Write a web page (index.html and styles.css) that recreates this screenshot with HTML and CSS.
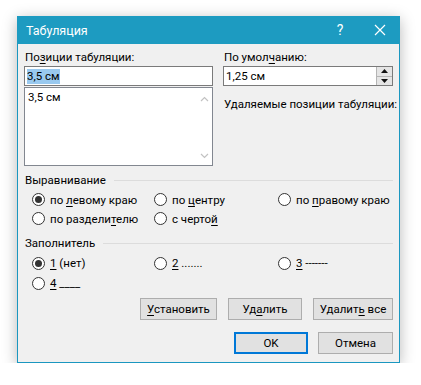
FILE: index.html
```html
<!DOCTYPE html>
<html lang="ru">
  <head>
    <meta charset="UTF-8" />
    <title>Табуляция</title>
    <link rel="stylesheet" href="styles.css">
  </head>
  <body>
    <div class="dialog">
      <div class="titlebar">
        <span class="title">Табуляция</span>
        <span class="help">?</span>
        <span class="close">
          <svg width="12" height="12" viewBox="0 0 12 12"><path d="M1 1 L11 11 M11 1 L1 11" stroke="#fff" stroke-width="1.2" fill="none"/></svg>
        </span>
      </div>

      <div class="content">
        <div class="top">
          <div class="col-left">
            <div class="label">По<u>з</u>иции табуляции:</div>
            <div class="input"><span class="selected">3,5 см</span></div>
            <div class="listbox">
              <div class="item">3,5 см</div>
              <div class="scroll">
                <svg width="9" height="6" viewBox="0 0 9 6"><path d="M1 5 L4.5 1.5 L8 5" stroke="#c2c2c2" stroke-width="1.2" fill="none"/></svg>
                <svg width="9" height="6" viewBox="0 0 9 6"><path d="M1 1 L4.5 4.5 L8 1" stroke="#c2c2c2" stroke-width="1.2" fill="none"/></svg>
              </div>
            </div>
          </div>
          <div class="col-right">
            <div class="label">По умол<u>ч</u>анию:</div>
            <div class="input spin">
              <span>1,25 см</span>
              <div class="spin-btns">
                <div class="spin-btn"><svg width="7" height="4" viewBox="0 0 7 4"><path d="M0 4 L3.5 0 L7 4 Z" fill="#111"/></svg></div>
                <div class="spin-btn"><svg width="7" height="4" viewBox="0 0 7 4"><path d="M0 0 L3.5 4 L7 0 Z" fill="#111"/></svg></div>
              </div>
            </div>
            <div class="label remove-label">Удаляемые позиции табуляции:</div>
          </div>
        </div>

        <div class="group-title">Выравнивание</div>
        <div class="radios align">
          <div class="radio"><span class="dot checked"></span><span>по <u>л</u>евому краю</span></div>
          <div class="radio"><span class="dot"></span><span>по <u>ц</u>ентру</span></div>
          <div class="radio"><span class="dot"></span><span>по <u>п</u>равому краю</span></div>
          <div class="radio"><span class="dot"></span><span>по раздели<u>т</u>елю</span></div>
          <div class="radio"><span class="dot"></span><span>с черто<u>й</u></span></div>
        </div>

        <div class="group-title filler-title">Заполнитель</div>
        <div class="radios filler">
          <div class="radio"><span class="dot checked"></span><span><u>1</u> (нет)</span></div>
          <div class="radio"><span class="dot"></span><span><u>2</u> .......</span></div>
          <div class="radio"><span class="dot"></span><span><u>3</u> -------</span></div>
          <div class="radio"><span class="dot"></span><span><u>4</u> ____</span></div>
        </div>

        <div class="buttons">
          <button class="btn b-set"><u>У</u>становить</button>
          <button class="btn b-del">Уд<u>а</u>лить</button>
          <button class="btn b-all">Удалит<u>ь</u> все</button>
        </div>
        <div class="buttons last">
          <button class="btn ok">OK</button>
          <button class="btn cancel">Отмена</button>
        </div>
      </div>
    </div>
  </body>
</html>
```

FILE: styles.css
```css
body {
  margin: 0;
  padding: 16px 0 0 17px;
  background: #fff;
  font-family: Roboto, "Noto Sans", sans-serif;
  font-size: 11.5px;
  color: #000;
}

u {
  text-decoration: underline;
  text-underline-offset: 2px;
}

.dialog {
  width: 381px;
  background: #f0f0f0;
  border: 1px solid #1b97c0;
  border-top: none;
  box-shadow: 0 3px 14px rgba(0, 0, 0, 0.28);
}

.titlebar {
  height: 28px;
  background: #1d9bc1;
  display: flex;
  align-items: center;
  color: #fff;
  margin: 0 -1px;
  padding: 0 0 0 9px;
}

.title {
  font-size: 12.5px;
  flex: 1;
}

.help {
  font-size: 14px;
  width: 46px;
  text-align: center;
  margin-right: -3px;
}

.close {
  width: 40px;
  display: flex;
  justify-content: center;
}

.content {
  padding: 5px 6px 8px 6px;
}

.top {
  display: flex;
  gap: 10px;
}

.col-left {
  flex: none;
  width: 189px;
}

.col-right {
  flex: 1;
  min-width: 0;
}

.label {
  height: 16px;
  line-height: 16px;
  margin-bottom: 1px;
  padding-left: 1px;
  white-space: nowrap;
}

.input {
  height: 18px;
  border: 1px solid #7a7a7a;
  background: #fff;
  display: flex;
  align-items: center;
  padding-left: 2px;
}

.selected {
  background: #99c9ef;
  line-height: 15px;
}

.listbox {
  margin-top: 1px;
  height: 77px;
  border: 1px solid #828790;
  background: #fff;
  display: flex;
}

.item {
  flex: 1;
  padding: 1px 0 0 3px;
  line-height: 16px;
}

.scroll {
  width: 16px;
  display: flex;
  flex-direction: column;
  justify-content: space-between;
  align-items: center;
  padding: 8px 0 6px;
}

.spin {
  padding-right: 0;
}

.spin span {
  flex: 1;
}

.spin-btns {
  width: 15px;
  height: 18px;
  display: flex;
  flex-direction: column;
  border-left: 1px solid #b5b5b5;
}

.spin-btn {
  flex: 1;
  display: flex;
  align-items: center;
  justify-content: center;
  background: #e5e5e5;
}

.spin-btn + .spin-btn {
  border-top: 1px solid #b5b5b5;
}

.remove-label {
  margin-top: 10px;
}

.group-title {
  margin-top: 6px;
  height: 16px;
  line-height: 16px;
  display: flex;
  align-items: center;
  gap: 8px;
  padding-left: 1px;
}

.group-title::after {
  content: "";
  flex: 1;
  border-top: 1px solid #dcdcdc;
}

.filler-title {
  margin-top: 7px;
}

.radios {
  display: grid;
  grid-template-columns: 122px 124px 1fr;
  padding: 2px 0 0 8px;
}

.align .radio {
  height: 19px;
}

.filler .radio {
  height: 20px;
}

.radio {
  display: flex;
  align-items: center;
  white-space: nowrap;
}

.dot {
  flex: none;
  width: 11px;
  height: 11px;
  border: 1px solid #333;
  border-radius: 50%;
  background: #fff;
  margin-right: 5px;
  display: flex;
  align-items: center;
  justify-content: center;
}

.dot.checked::after {
  content: "";
  width: 7px;
  height: 7px;
  border-radius: 50%;
  background: #333;
}

.buttons {
  display: flex;
  justify-content: flex-end;
  gap: 11px;
  margin-top: 5px;
}

.buttons.last {
  margin-top: 12px;
  gap: 10px;
}

.btn {
  font-family: inherit;
  font-size: 11.5px;
  color: #000;
  height: 22px;
  padding: 0;
  background: #e1e1e1;
  border: 1px solid #adadad;
}

.b-set {
  width: 77px;
}

.b-del {
  width: 74px;
}

.b-all {
  width: 80px;
}

.ok {
  width: 74px;
  border: 2px solid #0078d7;
}

.cancel {
  width: 75px;
}
```
